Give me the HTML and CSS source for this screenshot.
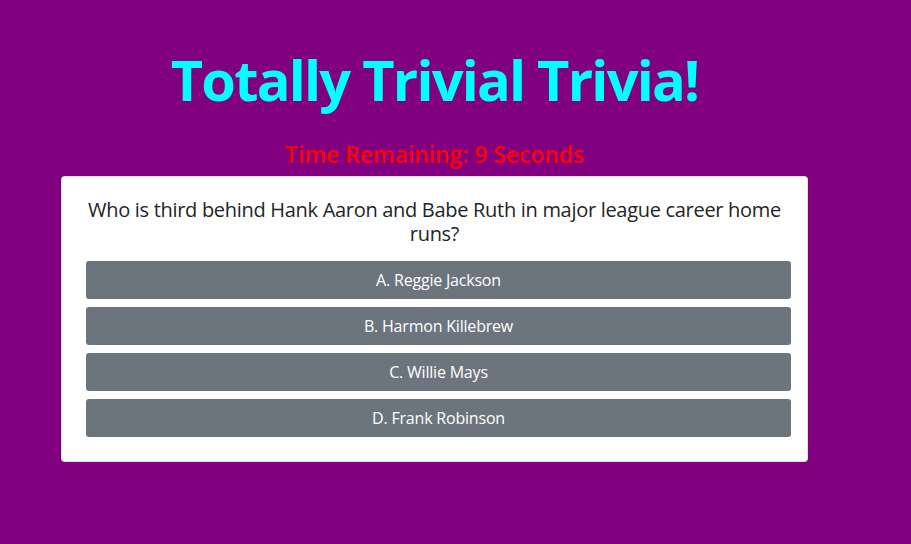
FILE: index.html
```html
<!DOCTYPE html>
<html>
<head>
<meta charset="utf-8">
<link rel="stylesheet" href="styles.css">
</head>
<body>
<main class="page">
  <h1 class="title">Totally Trivial Trivia!</h1>
  <h4 class="timer">Time Remaining: 9 Seconds</h4>
  <section class="card">
    <h5 class="question">Who is third behind Hank Aaron and Babe Ruth in major league career home runs?</h5>
    <div class="answers">
      <button class="answer">A. Reggie Jackson</button>
      <button class="answer">B. Harmon Killebrew</button>
      <button class="answer">C. Willie Mays</button>
      <button class="answer">D. Frank Robinson</button>
    </div>
  </section>
</main>
</body>
</html>
```
FILE: styles.css
```css
html, body {
  margin: 0;
  padding: 0;
  background: #800080;
  font-family: "Open Sans", "Noto Sans", sans-serif;
}
.page {
  width: 747px;
  margin-left: 61px;
  padding-top: 46px;
}
.title {
  margin: 0;
  text-align: center;
  color: #00ffff;
  font-size: 56px;
  font-weight: 700;
  line-height: 1.2;
  letter-spacing: -1.8px;
}
.timer {
  margin: 28px 0 0;
  text-align: center;
  color: #ff0000;
  font-size: 23px;
  font-weight: 600;
  line-height: 1.2;
  letter-spacing: -0.1px;
}
.card {
  margin-top: 7px;
  background: #fff;
  border: 1px solid rgba(0,0,0,.125);
  border-radius: 4px;
  padding: 21px 16px 24px 24px;
}
.question {
  margin: 0 0 15px -8px;
  text-align: center;
  color: #212529;
  font-size: 20px;
  font-weight: 500;
  line-height: 24px;
  letter-spacing: -0.3px;
}
.answers {
  display: flex;
  flex-direction: column;
  gap: 8px;
}
.answer {
  display: block;
  width: 100%;
  height: 38px;
  border: none;
  border-radius: 3px;
  background: #6c757d;
  color: #fff;
  font-family: inherit;
  font-size: 16px;
  letter-spacing: -0.2px;
  cursor: pointer;
}
```
